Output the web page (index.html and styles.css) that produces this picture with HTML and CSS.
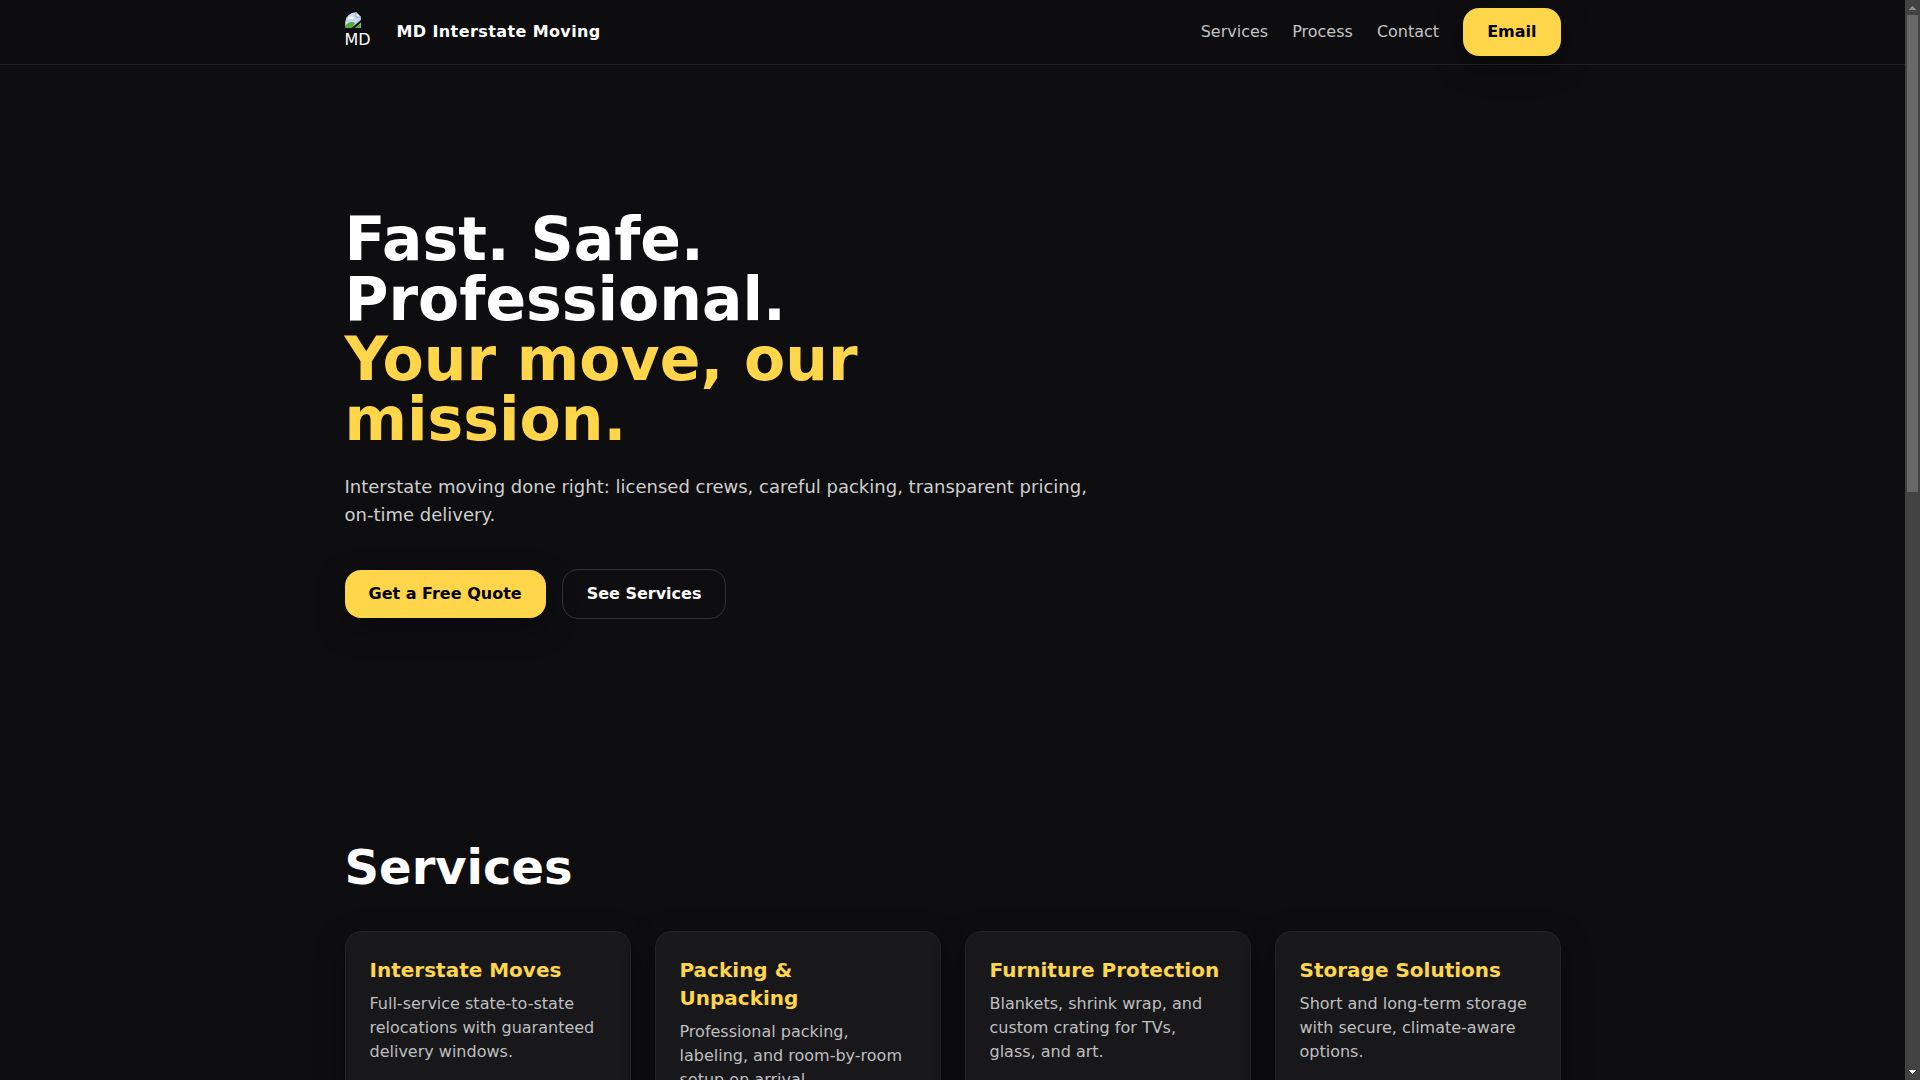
FILE: index.html
```html
<!DOCTYPE html>
<html lang="en">
<head>
<meta charset="utf-8">
<meta name="viewport" content="width=device-width, initial-scale=1">
<title>MD Interstate Moving</title>
<link rel="stylesheet" href="styles.css">
</head>
<body>
<div class="page" id="top">
  <header class="site-header">
    <div class="container header-row">
      <a class="brand" href="#top">
        <span class="logo">
          <svg class="logo-icon" viewBox="0 0 16 16" width="16" height="16" aria-hidden="true">
            <path d="M0 0h11l5 5v11H0z" fill="#b9bfca"/>
            <path d="M1 1h9.500l4.500 4.500V8L7 15H1z" fill="#c6d9fb"/>
            <path d="M11 0v5h5z" fill="#f4f4f4" stroke="#8b8f96" stroke-width=".8"/>
            <path d="M3 7a2 2 0 0 1 2-2 2.500 2.500 0 0 1 4 1.500z" fill="#fff"/>
            <path d="M0 16v-2c3-4 7-5 10-3l-3 5z" fill="#55ad35"/>
            <path d="M16 8v2.500L10 16H6.500z" fill="#0d0d0f"/>
            <path d="M11 15.500 15.500 11.500V16H11z" fill="#55ad35"/>
          </svg>
          <span class="logo-text">MD</span>
        </span>
        <span class="brand-name">MD Interstate Moving</span>
      </a>
      <nav class="nav">
        <a class="nav-link" href="#services">Services</a>
        <a class="nav-link" href="#process">Process</a>
        <a class="nav-link" href="#contact">Contact</a>
        <a class="btn btn-primary" href="#contact">Email</a>
      </nav>
    </div>
  </header>
  <main>
    <section class="hero container">
      <h1 class="hero-title">Fast. Safe. Professional.<br><span class="accent">Your move, our mission.</span></h1>
      <p class="hero-text">Interstate moving done right: licensed crews, careful packing, transparent pricing, on-time delivery.</p>
      <div class="hero-actions">
        <a class="btn btn-primary" href="#contact">Get a Free Quote</a>
        <a class="btn btn-outline" href="#services">See Services</a>
      </div>
    </section>
    <section class="services container" id="services">
      <h2 class="section-title">Services</h2>
      <div class="cards">
        <article class="card"><h3 class="card-title">Interstate Moves</h3><p class="card-text">Full-service state-to-state relocations with guaranteed delivery windows.</p></article>
        <article class="card"><h3 class="card-title">Packing &amp; Unpacking</h3><p class="card-text">Professional packing, labeling, and room-by-room setup on arrival.</p></article>
        <article class="card"><h3 class="card-title">Furniture Protection</h3><p class="card-text">Blankets, shrink wrap, and custom crating for TVs, glass, and art.</p></article>
        <article class="card"><h3 class="card-title">Storage Solutions</h3><p class="card-text">Short and long-term storage with secure, climate-aware options.</p></article>
      </div>
    </section>
  </main>
</div>
<div class="scrollbar" aria-hidden="true">
  <svg class="scroll-arrow" viewBox="0 0 15 15" width="15" height="15"><path d="M7 6h1v1h1v1h1v1h1v1H4V9h1V8h1V7h1z" fill="#8b8b8b"/></svg>
  <div class="scroll-track"><div class="scroll-thumb"></div></div>
  <svg class="scroll-arrow" viewBox="0 0 15 15" width="15" height="15"><path d="M4 5h7v1h-1v1H9v1H8v1H7V8H6V7H5V6H4z" fill="#fff"/></svg>
</div>
</body>
</html>
```
FILE: styles.css
```css
:root {
  color-scheme: dark;
  --bg: #0e0e10;
  --accent: #ffd54a;
  --shadow: 0 10px 30px rgba(0, 0, 0, 0.35);
}
* { box-sizing: border-box; margin: 0; }
html { scrollbar-width: none; }
body {
  display: grid;
  grid-template-columns: minmax(0, 1fr) 15px;
  align-items: start;
  min-height: 220vh;
  background: var(--bg);
  color: #fff;
  font: 16px/24px "DejaVu Sans", sans-serif;
}
a { color: inherit; text-decoration: none; }
.container { width: 100%; max-width: 1280px; margin: 0 auto; padding: 0 32px; }
.site-header {
  position: sticky;
  top: 0;
  background: #0d0d0f;
  border-bottom: 1px solid #252527;
}
.header-row { display: flex; align-items: center; justify-content: space-between; height: 64px; }
.brand { display: flex; align-items: center; gap: 12px; }
.logo { display: block; width: 40px; height: 40px; border-radius: 12px; overflow: hidden; }
.logo-icon { display: block; }
.logo-text { display: block; }
.brand-name { font-weight: 700; letter-spacing: 0.025em; }
.nav { display: flex; align-items: center; gap: 24px; }
.nav-link { color: #c4c4c5; }
.btn { padding: 12px 24px; border-radius: 16px; font-weight: 700; }
.btn-primary { background: var(--accent); color: #000; box-shadow: var(--shadow); }
.btn-outline { border: 1px solid #323234; }
.hero { padding-top: 144px; padding-bottom: 144px; }
.hero-title { max-width: 768px; font-size: 60px; line-height: 60px; }
.accent { color: var(--accent); }
.hero-text { max-width: 768px; margin-top: 24px; font-size: 18px; line-height: 28px; color: #cfcfcf; }
.hero-actions { display: flex; align-items: center; gap: 16px; margin-top: 40px; }
.services { padding-top: 80px; padding-bottom: 80px; }
.section-title { font-size: 48px; line-height: 48px; }
.cards { display: grid; grid-template-columns: repeat(4, 1fr); gap: 24px; margin-top: 40px; }
.card { padding: 24px; background: #18181a; border: 1px solid #232325; border-radius: 16px; box-shadow: var(--shadow); }
.card-title { font-size: 20px; line-height: 28px; color: var(--accent); }
.card-text { margin-top: 8px; color: #bfbfc0; }
.scrollbar {
  position: sticky;
  top: 0;
  display: flex;
  flex-direction: column;
  height: 100vh;
  background: #424242;
}
.scroll-arrow { display: block; flex: none; }
.scroll-track { flex: 1; padding: 0 2px; }
.scroll-thumb { height: 45.4%; background: #686868; }
```
